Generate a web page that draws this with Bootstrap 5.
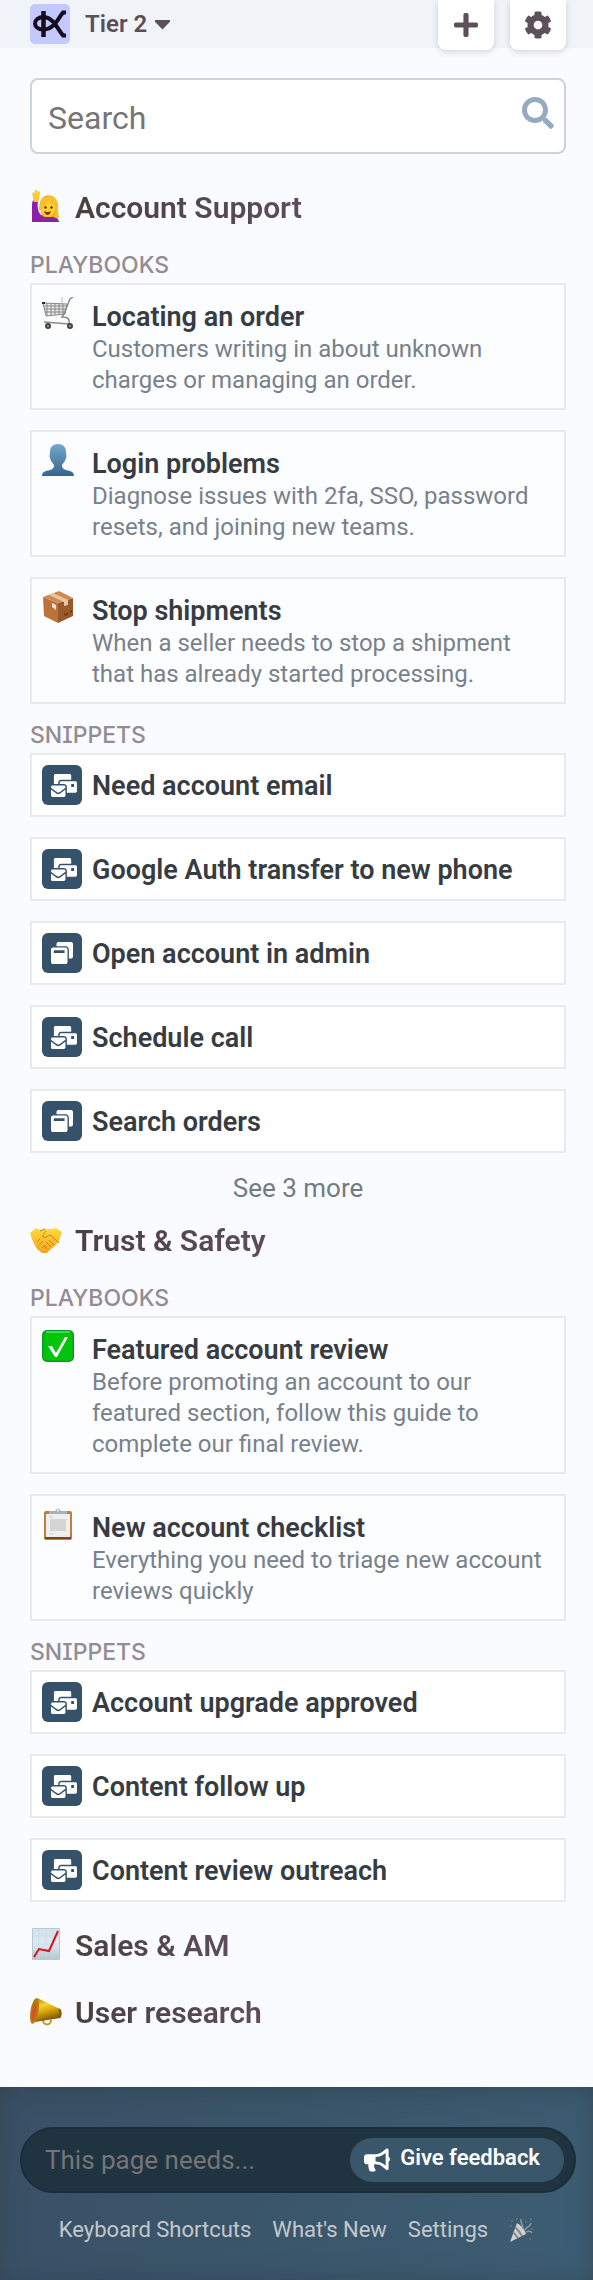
<!DOCTYPE html>
<html lang="en">
<head>
<meta charset="utf-8">
<meta name="viewport" content="width=device-width, initial-scale=1">
<title>Tier 2 playbooks</title>
<link href="https://cdn.jsdelivr.net/npm/bootstrap@5.3.0/dist/css/bootstrap.min.css" rel="stylesheet">
<style>
body{font-family:Roboto,"Liberation Sans",sans-serif;background:#fafbff;color:#373c42}
a{color:inherit;text-decoration:none}
svg{display:block;flex:none}
.topbar{height:48px;background:#f0f4f9;padding:0 27px 0 30px;color:#5b4f58}
.brand{width:40px;height:40px;border-radius:5px;background:#c3c9ff}
.tier{font-size:24px;line-height:30px;font-weight:600;gap:8px;margin-left:15px}
.tab-btn{width:56px;height:50px;border-radius:0 0 8px 8px;background:#fff;color:#5c505a;box-shadow:0 2px 6px rgba(60,50,70,.2)}
main{padding:30px 27px 54px 30px}
.search{height:76px;border:2px solid #cdd3db;border-radius:8px;background:#fff;padding:0 10px 0 16px;margin-bottom:34px;color:#96aac2}
.search input{font-size:32px;line-height:40px;color:#333}
.search input::placeholder,.needs input::placeholder{color:#757575;opacity:1}
.search svg{margin-bottom:6px}
.group-title{font-size:30px;line-height:40px;font-weight:600;gap:13px;margin:0}
.group-title span{background:linear-gradient(90deg,#49413f,#5c4d5e);-webkit-background-clip:text;background-clip:text;color:transparent}
.group-title svg{margin-bottom:4px}
.kind{font-family:Inter,"Liberation Sans",sans-serif;font-feature-settings:"cv08";font-size:23px;line-height:28px;font-weight:500;color:#938c93;margin:0 0 4px}
.group-title + .kind{margin-top:23px}
.entry{border:2px solid #e9ebeb;background:#fcfdff;padding:12px 14px 12px 10px;gap:10px}
.entry .pic{flex:none;width:40px}
.entry .words{padding-top:4px}
.entry h3,.snip h3{font-size:27px;line-height:33px;font-weight:600;margin:0}
.entry p{font-size:24px;line-height:31px;color:#78818b;margin:0}
.snip{border:2px solid #e9ebeb;background:#fff;height:64px;padding:0 10px;gap:10px}
.snip h3{padding-top:2px}
.tile{width:40px;height:40px;border-radius:6px;background:#35526a;color:#fff;padding-left:9px}
.stack{gap:20px}
.stack + .kind{margin-top:17px}
.more{font-size:26px;line-height:32px;color:#717b84;margin:19px 0 17px}
.closed{gap:27px;margin-top:24px}
footer{background:linear-gradient(115deg,#3a5066,#3a566a 50%,#3d5e75);box-shadow:inset 0 2px 24px rgba(48,62,72,.6);padding:40px 17px 35px 20px}
.needs{height:66px;border:2px solid #1b2d38;border-radius:33px;background:#203341;padding:0 10px 0 23px}
.needs input{font-size:26px;line-height:32px;color:#ddd}
.give{height:44px;border-radius:22px;background:#3a566a;color:#fff;font-size:22px;line-height:28px;font-weight:600;padding:0 24px 4px 14px;gap:10px}
.foot-links{font-size:22px;line-height:30px;color:#c3c8cc;gap:21px;margin-top:22px;padding-right:4px}
</style>
</head>
<body>
<svg width="0" height="0" class="position-absolute" aria-hidden="true">
<symbol id="mail" viewBox="0 0 576 512"><path fill="currentColor" d="M160 448c-25.6 0-51.2-22.4-64-32-64-44.8-83.2-60.8-96-70.4V480c0 17.67 14.33 32 32 32h256c17.67 0 32-14.33 32-32V345.6c-12.8 9.6-32 25.6-96 70.4-12.8 9.6-38.4 32-64 32zm128-192H32c-17.67 0-32 14.33-32 32v16c25.6 19.2 22.4 19.2 115.2 86.4 9.6 6.4 28.8 25.6 44.8 25.6s35.2-19.2 44.8-22.4c92.8-67.2 89.6-67.2 115.2-86.4V288c0-17.67-14.33-32-32-32zm256-96H224c-17.67 0-32 14.33-32 32v32h96c33.21 0 60.59 25.42 63.71 57.82l.29-.22V416h192c17.67 0 32-14.33 32-32V192c0-17.67-14.33-32-32-32zm-32 128h-64v-64h64v64zm-352-96c0-35.29 28.71-64 64-64h224V32c0-17.67-14.33-32-32-32H96C78.33 0 64 14.33 64 32v192h96v-32z"/></symbol>
<symbol id="win" viewBox="0 0 512 512"><path fill="currentColor" d="M512 48v288c0 26.5-21.5 48-48 48h-48V176c0-44.1-35.9-80-80-80H128V48c0-26.5 21.5-48 48-48h288c26.5 0 48 21.5 48 48zM384 176v288c0 26.5-21.5 48-48 48H48c-26.5 0-48-21.5-48-48V176c0-26.5 21.5-48 48-48h288c26.5 0 48 21.5 48 48zm-68 28c0-6.6-5.4-12-12-12H76c-6.6 0-12 5.4-12 12v52h252v-52z"/></symbol>
<defs>
<linearGradient id="gPerson" x2="0" y2="1"><stop stop-color="#74a9cb"/><stop offset="1" stop-color="#36658f"/></linearGradient>
<linearGradient id="gPaper" x2="0" y2="1"><stop stop-color="#d3e2ec"/><stop offset=".5" stop-color="#dfeaf2"/><stop offset="1" stop-color="#b5c5cf"/></linearGradient>
<linearGradient id="gGold" x2=".3" y2="1"><stop stop-color="#a87a05"/><stop offset=".35" stop-color="#f7d22c"/><stop offset=".6" stop-color="#d9a90e"/><stop offset="1" stop-color="#7d5602"/></linearGradient>
<linearGradient id="gHand" x2="0" y2="1"><stop stop-color="#ffdc3d"/><stop offset="1" stop-color="#f3a41b"/></linearGradient>
</defs>
</svg>

<header class="topbar d-flex align-items-center">
  <a href="#" class="brand" aria-label="Home"><svg width="40" height="40" viewBox="0 0 40 40" fill="none" stroke="#150b1d" stroke-width="4"><path d="M13.5 7v26" stroke-width="4.5"/><path d="M36 8.500h-3C27 16 24 25 14 25.500C2 26 2 13 14 13C23 13.500 27 24 33 31.500h3"/></svg></a>
  <button type="button" class="tier btn p-0 border-0 d-flex align-items-center text-reset">Tier 2 <svg width="15" height="9" viewBox="17 192 286 169" preserveAspectRatio="none"><path fill="currentColor" d="M31.3 192h257.3c17.800 0 26.700 21.500 14.100 34.100L174.100 354.700c-7.800 7.800-20.500 7.800-28.300 0L17.200 226.100C4.600 213.500 13.500 192 31.300 192z"/></svg></button>
  <div class="d-flex gap-3 ms-auto align-self-start">
    <button type="button" class="tab-btn btn border-0 p-0 d-flex align-items-center justify-content-center" aria-label="Add"><svg width="24" height="28" viewBox="0 0 448 512"><path fill="currentColor" d="M416 208H272V64c0-17.670-14.330-32-32-32h-32c-17.670 0-32 14.330-32 32v144H32c-17.670 0-32 14.330-32 32v32c0 17.670 14.330 32 32 32h144v144c0 17.670 14.330 32 32 32h32c17.670 0 32-14.330 32-32V304h144c17.670 0 32-14.330 32-32v-32c0-17.670-14.330-32-32-32z"/></svg></button>
    <button type="button" class="tab-btn btn border-0 p-0 d-flex align-items-center justify-content-center" aria-label="Settings"><svg width="28" height="28" viewBox="0 0 512 512"><path fill="currentColor" d="M487.400 315.700l-42.600-24.600c4.300-23.200 4.300-47 0-70.200l42.600-24.600c4.900-2.800 7.100-8.600 5.500-14-11.100-35.600-30-67.800-54.700-94.600-3.800-4.100-10-5.100-14.800-2.300L380.800 110c-17.900-15.400-38.500-27.300-60.800-35.100V25.800c0-5.600-3.900-10.500-9.400-11.700-36.700-8.200-74.300-7.800-109.200 0-5.500 1.200-9.400 6.100-9.400 11.700V75c-22.200 7.900-42.800 19.800-60.800 35.100L88.700 85.500c-4.900-2.800-11-1.900-14.800 2.300-24.700 26.700-43.600 58.900-54.700 94.600-1.700 5.400.6 11.200 5.500 14L67.300 221c-4.300 23.200-4.300 47 0 70.200l-42.600 24.600c-4.900 2.800-7.100 8.600-5.500 14 11.100 35.600 30 67.800 54.700 94.600 3.800 4.100 10 5.100 14.800 2.300l42.600-24.600c17.900 15.400 38.500 27.300 60.800 35.100v49.200c0 5.600 3.900 10.500 9.400 11.700 36.700 8.200 74.300 7.800 109.200 0 5.500-1.200 9.400-6.100 9.400-11.700v-49.200c22.200-7.900 42.800-19.800 60.800-35.100l42.600 24.600c4.900 2.800 11 1.900 14.800-2.300 24.700-26.700 43.600-58.900 54.700-94.600 1.500-5.500-.7-11.300-5.600-14.100zM256 336c-44.100 0-80-35.900-80-80s35.900-80 80-80 80 35.900 80 80-35.900 80-80 80z"/></svg></button>
  </div>
</header>

<main>
  <form role="search" class="search d-flex align-items-center">
    <input type="search" class="form-control border-0 p-0 pt-1 bg-transparent shadow-none" placeholder="Search" aria-label="Search">
    <svg width="32" height="32" viewBox="0 0 512 512"><path fill="currentColor" d="M505 442.700L405.300 343c-4.500-4.500-10.600-7-17-7H372c27.600-35.300 44-79.700 44-128C416 93.100 322.900 0 208 0S0 93.100 0 208s93.100 208 208 208c48.300 0 92.700-16.400 128-44v16.300c0 6.400 2.500 12.500 7 17l99.700 99.700c9.400 9.400 24.600 9.400 33.900 0l28.300-28.300c9.400-9.400 9.400-24.600.1-34zM208 336c-70.700 0-128-57.200-128-128 0-70.700 57.200-128 128-128 70.700 0 128 57.200 128 128 0 70.700-57.200 128-128 128z"/></svg>
  </form>

  <section>
    <h2 class="group-title d-flex align-items-center">
      <svg width="32" height="32" viewBox="0 0 32 32"><path d="M10 16C10 8 14 5 19 5.500c6 .5 9 5 8 12 0 5 2 8 1 11H12z" fill="#eda91c"/><path d="M2 32V16c0-3 0-5 2-6l4 1c-1 5 0 10 2 13l4 3h8c4 0 7 2 7 5z" fill="#8d20a5"/><path d="M2 3l2-1 1 3V0h2v5l1-4 2 1-1 7-1 3H4C3 9 3 7 2 3z" fill="#ffc62b"/><ellipse cx="18" cy="18" rx="7.500" ry="9" fill="#ffcf31"/><path d="M9 20C9 10 13 5 19 5.500c7 0 10 7 9 14 0 4 1 6 1 8h-5c2-4 2-9 1-13-3 0-5-2-6-3-2 3-6 4-7 9z" fill="#f9bd30"/><circle cx="15.500" cy="17.500" r="1.200" fill="#563018"/><circle cx="21.500" cy="17.500" r="1.200" fill="#563018"/><path d="M14 21q4 2 7 0-1 4-3.500 4T14 21z" fill="#7b3422"/></svg>
      <span>Account Support</span></h2>
    <h6 class="kind">PLAYBOOKS</h6>
    <div class="stack d-flex flex-column">
      <a href="#" class="entry d-flex align-items-start"><span class="pic"><svg width="32" height="32" viewBox="0 0 32 32" fill="none" stroke="#8b8986" stroke-width="1"><path d="M1 6l24 1-2 10-19 2z" fill="#e9e9e8"/><path d="M1.500 9h23M2 12h22M3 15h21M5 6v13M9 6v12M13 6v12M17 6v12M21 6v12"/><path d="M31 0l-3 2-6 15-2 3c6 0 8 2 7 7L2 25" stroke-width="1.500"/><path d="M20 0v7" stroke="#bbb"/><path d="M0 5h3v2H0z" fill="#173048" stroke="none"/><circle cx="6" cy="29" r="2" fill="#aaa" stroke="#4b403d" stroke-width="2"/><circle cx="28" cy="29" r="2" fill="#aaa" stroke="#4b403d" stroke-width="2"/></svg></span>
        <div class="words"><h3>Locating an order</h3><p>Customers writing in about unknown charges or managing an order.</p></div></a>
      <a href="#" class="entry d-flex align-items-start"><span class="pic"><svg width="32" height="32" viewBox="0 0 32 32"><path fill="url(#gPerson)" d="M16 0c5 0 8 3 8 8 0 2 1 4 0 6-1 4-3 5-4 7 0 3 1 4 4 5 5 1 8 2 8 6H0c0-4 3-5 8-6 3-1 4-2 4-5-1-2-3-3-4-7-1-2 0-4 0-6 0-5 3-8 8-8z"/></svg></span>
        <div class="words"><h3>Login problems</h3><p>Diagnose issues with 2fa, SSO, password resets, and joining new teams.</p></div></a>
      <a href="#" class="entry d-flex align-items-start"><span class="pic"><svg width="32" height="32" viewBox="0 0 32 32"><path d="M1 6l15 6v20L2 25z" fill="#bc7238"/><path d="M16 12l15-5v18l-15 7z" fill="#985a2b"/><path d="M1 6l16-6 14 7-15 5z" fill="#ce8b51"/><path d="M7 4l4-2 15 7v5l-4 1v-4z" fill="#e5c5a5"/><path d="M10 12l4 2v5l-4-3z" fill="#e5e4e2"/><path d="M22 22l2 1 2-2v2l-3 2zM28 20l2-1v2l-2 1z" fill="#613617"/></svg></span>
        <div class="words"><h3>Stop shipments</h3><p>When a seller needs to stop a shipment that has already started processing.</p></div></a>
    </div>
    <h6 class="kind">SNIPPETS</h6>
    <div class="stack d-flex flex-column">
      <a href="#" class="snip d-flex align-items-center"><span class="tile d-flex align-items-center"><svg width="26" height="23"><use href="#mail"/></svg></span><h3>Need account email</h3></a>
      <a href="#" class="snip d-flex align-items-center"><span class="tile d-flex align-items-center"><svg width="26" height="23"><use href="#mail"/></svg></span><h3>Google Auth transfer to new phone</h3></a>
      <a href="#" class="snip d-flex align-items-center"><span class="tile d-flex align-items-center"><svg width="22" height="22"><use href="#win"/></svg></span><h3>Open account in admin</h3></a>
      <a href="#" class="snip d-flex align-items-center"><span class="tile d-flex align-items-center"><svg width="26" height="23"><use href="#mail"/></svg></span><h3>Schedule call</h3></a>
      <a href="#" class="snip d-flex align-items-center"><span class="tile d-flex align-items-center"><svg width="22" height="22"><use href="#win"/></svg></span><h3>Search orders</h3></a>
    </div>
    <div class="more text-center"><a href="#">See 3 more</a></div>
  </section>

  <section>
    <h2 class="group-title d-flex align-items-center">
      <svg width="32" height="32" viewBox="0 0 32 32"><path d="M0 10l6-5 4 2 6-1 6 0 4-1 6 4-3 9-3 4-5 4-4 4-5 0-5-4-3-5-2-5z" fill="url(#gHand)"/><path d="M10 8l5-2M16 8c-2 3-4 4-3 6 3 1 5-1 7-2 3 2 6 5 9 8M19 17l5 5M16 19l5 5M14 22l3 4M7 19l3-3M9 22l4-4M12 25l3-3" fill="none" stroke="#cc8113" stroke-width="1"/></svg>
      <span>Trust &amp; Safety</span></h2>
    <h6 class="kind">PLAYBOOKS</h6>
    <div class="stack d-flex flex-column">
      <a href="#" class="entry d-flex align-items-start"><span class="pic"><svg width="32" height="32" viewBox="0 0 32 32"><rect width="32" height="32" rx="5" fill="#0c9b20"/><rect x="1.500" y="2" width="29" height="28.500" rx="4" fill="#00c50c"/><path d="M4 2h24" stroke="#64dd67" stroke-width="1.500"/><path d="M6 16h4l4 7L23 7h3L15 27h-2z" fill="#fff"/></svg></span>
        <div class="words"><h3>Featured account review</h3><p>Before promoting an account to our featured section, follow this guide to complete our final review.</p></div></a>
      <a href="#" class="entry d-flex align-items-start"><span class="pic"><svg width="32" height="32" viewBox="0 0 32 32"><rect x="2" y="3" width="28" height="29" rx="2" fill="#b9803f"/><path d="M3 29h26v2H3z" fill="#7c4613"/><path d="M4 6h24v23H4z" fill="#efeff0"/><path d="M8 11h16v12H8z" fill="#d5d5d6"/><path d="M7 9h4M7 26h5" stroke="#ccc"/><path d="M7 3h6l2-2q1-1 2 0l2 2h6v3H7z" fill="#a7b1b8"/><circle cx="16" cy="2.500" r="1" fill="#fff"/></svg></span>
        <div class="words"><h3>New account checklist</h3><p>Everything you need to triage new account reviews quickly</p></div></a>
    </div>
    <h6 class="kind">SNIPPETS</h6>
    <div class="stack d-flex flex-column">
      <a href="#" class="snip d-flex align-items-center"><span class="tile d-flex align-items-center"><svg width="26" height="23"><use href="#mail"/></svg></span><h3>Account upgrade approved</h3></a>
      <a href="#" class="snip d-flex align-items-center"><span class="tile d-flex align-items-center"><svg width="26" height="23"><use href="#mail"/></svg></span><h3>Content follow up</h3></a>
      <a href="#" class="snip d-flex align-items-center"><span class="tile d-flex align-items-center"><svg width="26" height="23"><use href="#mail"/></svg></span><h3>Content review outreach</h3></a>
    </div>
  </section>

  <section class="closed d-flex flex-column">
    <h2 class="group-title d-flex align-items-center">
      <svg width="32" height="32" viewBox="0 0 32 32"><path d="M2.500.5h27v31h-27z" fill="url(#gPaper)" stroke="#b9c9d3"/><path d="M9 1v30M16 1v30M23 1v30M3 8h26M3 16h26M3 24h26" stroke="#c6d9e6" stroke-width=".7"/><path d="M4 29l5-8 10 2L28 3" fill="none" stroke="#d8131d" stroke-width="2"/></svg>
      <span>Sales &amp; AM</span></h2>
    <h2 class="group-title d-flex align-items-center">
      <svg width="32" height="32" viewBox="0 0 32 32"><path d="M13 25c0 6 8 6 8 0" fill="none" stroke="#c59612" stroke-width="2"/><path d="M7 3l23 11c2 2 2 7 0 9L5 27z" fill="url(#gGold)"/><ellipse cx="4.500" cy="16" rx="4" ry="13" fill="#b57a10" transform="rotate(9 4.500 16)"/><ellipse cx="4" cy="17" rx="2" ry="9" fill="#d1571f" transform="rotate(9 4 17)"/><path d="M29 14q3 4 0 9" fill="none" stroke="#815a05" stroke-width="2"/></svg>
      <span>User research</span></h2>
  </section>
</main>

<footer>
  <form class="needs d-flex align-items-center">
    <input type="text" class="form-control border-0 p-0 bg-transparent shadow-none" placeholder="This page needs..." aria-label="Feedback about this page">
    <button type="button" class="give btn border-0 d-flex align-items-center text-nowrap"><svg class="mt-1" width="26" height="24" viewBox="0 0 576 512"><path fill="currentColor" d="M576 240c0-23.630-12.950-44.040-32-55.120V32.010C544 23.260 537.020 0 512 0c-7.120 0-14.190 2.380-19.980 7.020l-85.030 68.030C364.280 109.190 310.660 128 256 128H64c-35.350 0-64 28.650-64 64v96c0 35.350 28.650 64 64 64h33.700c-1.390 10.480-2.180 21.140-2.180 32 0 39.770 9.260 77.350 25.560 110.940 5.190 10.690 16.520 17.060 28.400 17.060h74.280c26.050 0 41.690-29.840 25.900-50.560-16.400-21.520-26.150-48.360-26.150-77.440 0-11.110 1.620-21.790 4.410-32H256c54.660 0 108.280 18.810 150.980 52.950l85.030 68.030a32.023 32.023 0 0 0 19.980 7.020c24.920 0 32-22.780 32-32V295.130C563.050 284.040 576 263.630 576 240zm-96 141.420l-33.050-26.440C392.950 311.780 325.120 288 256 288v-96c69.120 0 136.950-23.780 190.950-66.980L480 98.580v282.840z"/></svg>Give feedback</button>
  </form>
  <nav class="foot-links d-flex justify-content-center align-items-center text-nowrap" aria-label="Footer">
    <a href="#">Keyboard Shortcuts</a><a href="#">What's New</a><a href="#">Settings</a>
    <a href="#" aria-label="Celebrate"><svg width="24" height="24" viewBox="0 0 24 24"><path d="M8 5q7 4 9 11L1 24z" fill="#d2d0d0"/><path d="M6 9q4 4 7 9M4 14q3 3 5 6" stroke="#8b898a" stroke-width="2" fill="none"/><path d="M14 11c0-5-3-6-2-10M16 12c1-4 5-2 6-7M17 14q4-2 6 1" stroke="#8d979d" stroke-width="1.500" fill="none"/><path d="M2 2h2v2H2zM7 0h2v2H7zM16 3h2v2h-2zM21 0h2v2h-2zM22 10h2v2h-2zM20 20h2v2h-2zM1 7h2v2H1z" fill="#626e75"/></svg></a>
  </nav>
</footer>
<script src="https://cdn.jsdelivr.net/npm/bootstrap@5.3.0/dist/js/bootstrap.bundle.min.js"></script>
</body>
</html>
